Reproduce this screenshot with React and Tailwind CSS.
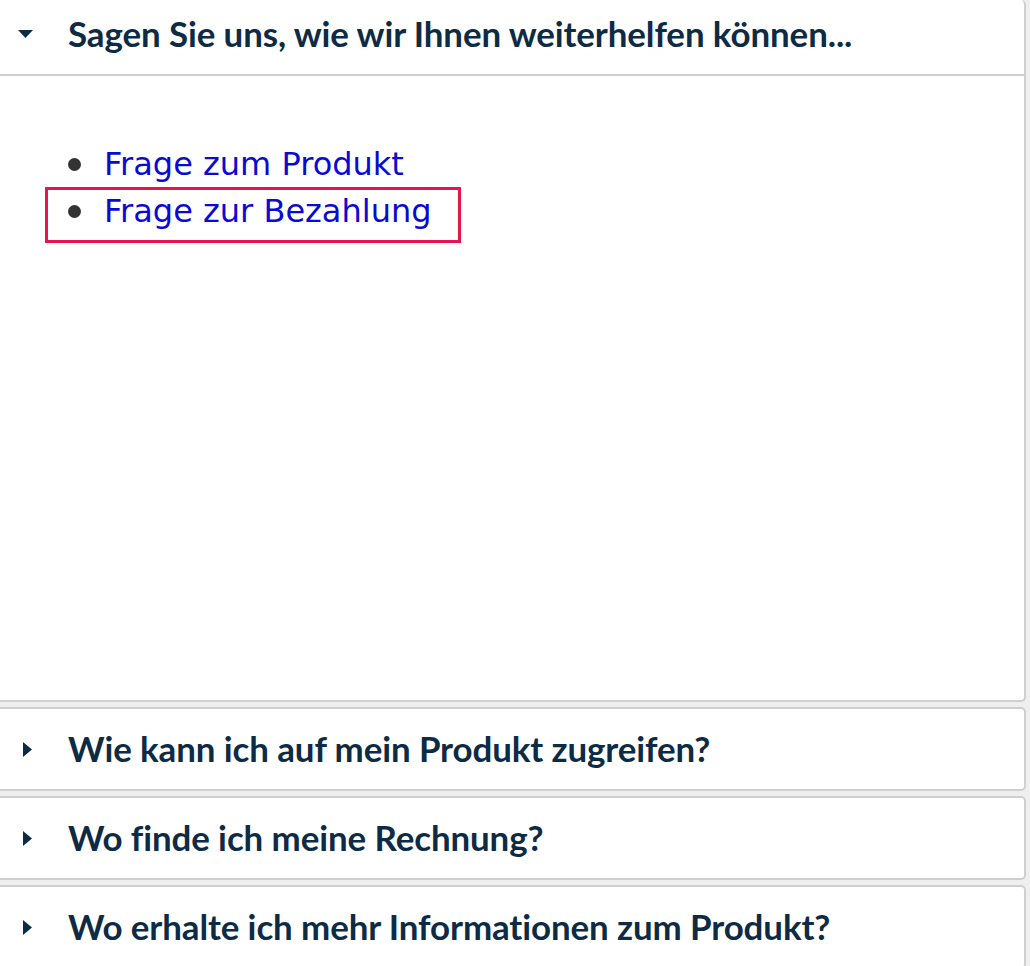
import React, { useState } from 'react';

const questions = [
  'Wie kann ich auf mein Produkt zugreifen?',
  'Wo finde ich meine Rechnung?',
  'Wo erhalte ich mehr Informationen zum Produkt?',
];

function Caret({ open }) {
  return open ? (
    <svg width="15" height="8" viewBox="0 0 15 8" className="shrink-0">
      <path d="M0 0 L15 0 L7.5 8 Z" fill="#0d2b45" />
    </svg>
  ) : (
    <svg width="9" height="15" viewBox="0 0 9 15" className="shrink-0">
      <path d="M0 0 L9 7.5 L0 15 Z" fill="#0d2b45" />
    </svg>
  );
}

const titleCls =
  "font-['Lato',sans-serif] text-[34.9px] font-bold tracking-[-0.1px] text-[#0d2b45] [font-variant-ligatures:none]";

export default function App() {
  const [open, setOpen] = useState(true);

  return (
    <div className="min-h-[966px] overflow-hidden bg-[#efefef]">
      <div className="ml-[-12px] flex w-[1038px] flex-col gap-[5px]">
        <div className="rounded-[5px] border-2 border-t-0 border-[#cfcfcf] bg-white">
          <button
            onClick={() => setOpen(!open)}
            className="flex h-[76px] w-full items-center border-b-2 border-[#cfcfcf] pb-[6px] text-left"
          >
            <span className="flex w-[78px] shrink-0 pl-[28px]">
              <Caret open={open} />
            </span>
            <span className={titleCls}>Sagen Sie uns, wie wir Ihnen weiterhelfen können...</span>
          </button>
          <div className="h-[624px] pt-[65px]">
            <ul className="font-['DejaVu_Sans',sans-serif] text-[32px] leading-[47px]">
              <li className="flex items-center pl-[78px]">
                <span className="mr-[23px] h-[13px] w-[13px] rounded-full bg-[#333]" />
                <a href="#" className="text-[#0a0ad2]">Frage zum Produkt</a>
              </li>
              <li className="relative flex items-center pl-[78px]">
                <span className="mr-[23px] h-[13px] w-[13px] rounded-full bg-[#333]" />
                <a href="#" className="text-[#0a0ad2]">Frage zur Bezahlung</a>
                <span className="pointer-events-none absolute left-[55px] top-[-1px] h-[56px] w-[416px] border-[3px] border-[#e6154d]" />
              </li>
            </ul>
          </div>
        </div>
        {questions.map((q) => (
          <div key={q} className="rounded-[5px] border-2 border-[#cfcfcf] bg-white">
            <button className="flex h-[80px] w-full items-center text-left">
              <span className="flex w-[78px] shrink-0 pl-[33px]">
                <Caret open={false} />
              </span>
              <span className={titleCls}>{q}</span>
            </button>
          </div>
        ))}
      </div>
    </div>
  );
}
